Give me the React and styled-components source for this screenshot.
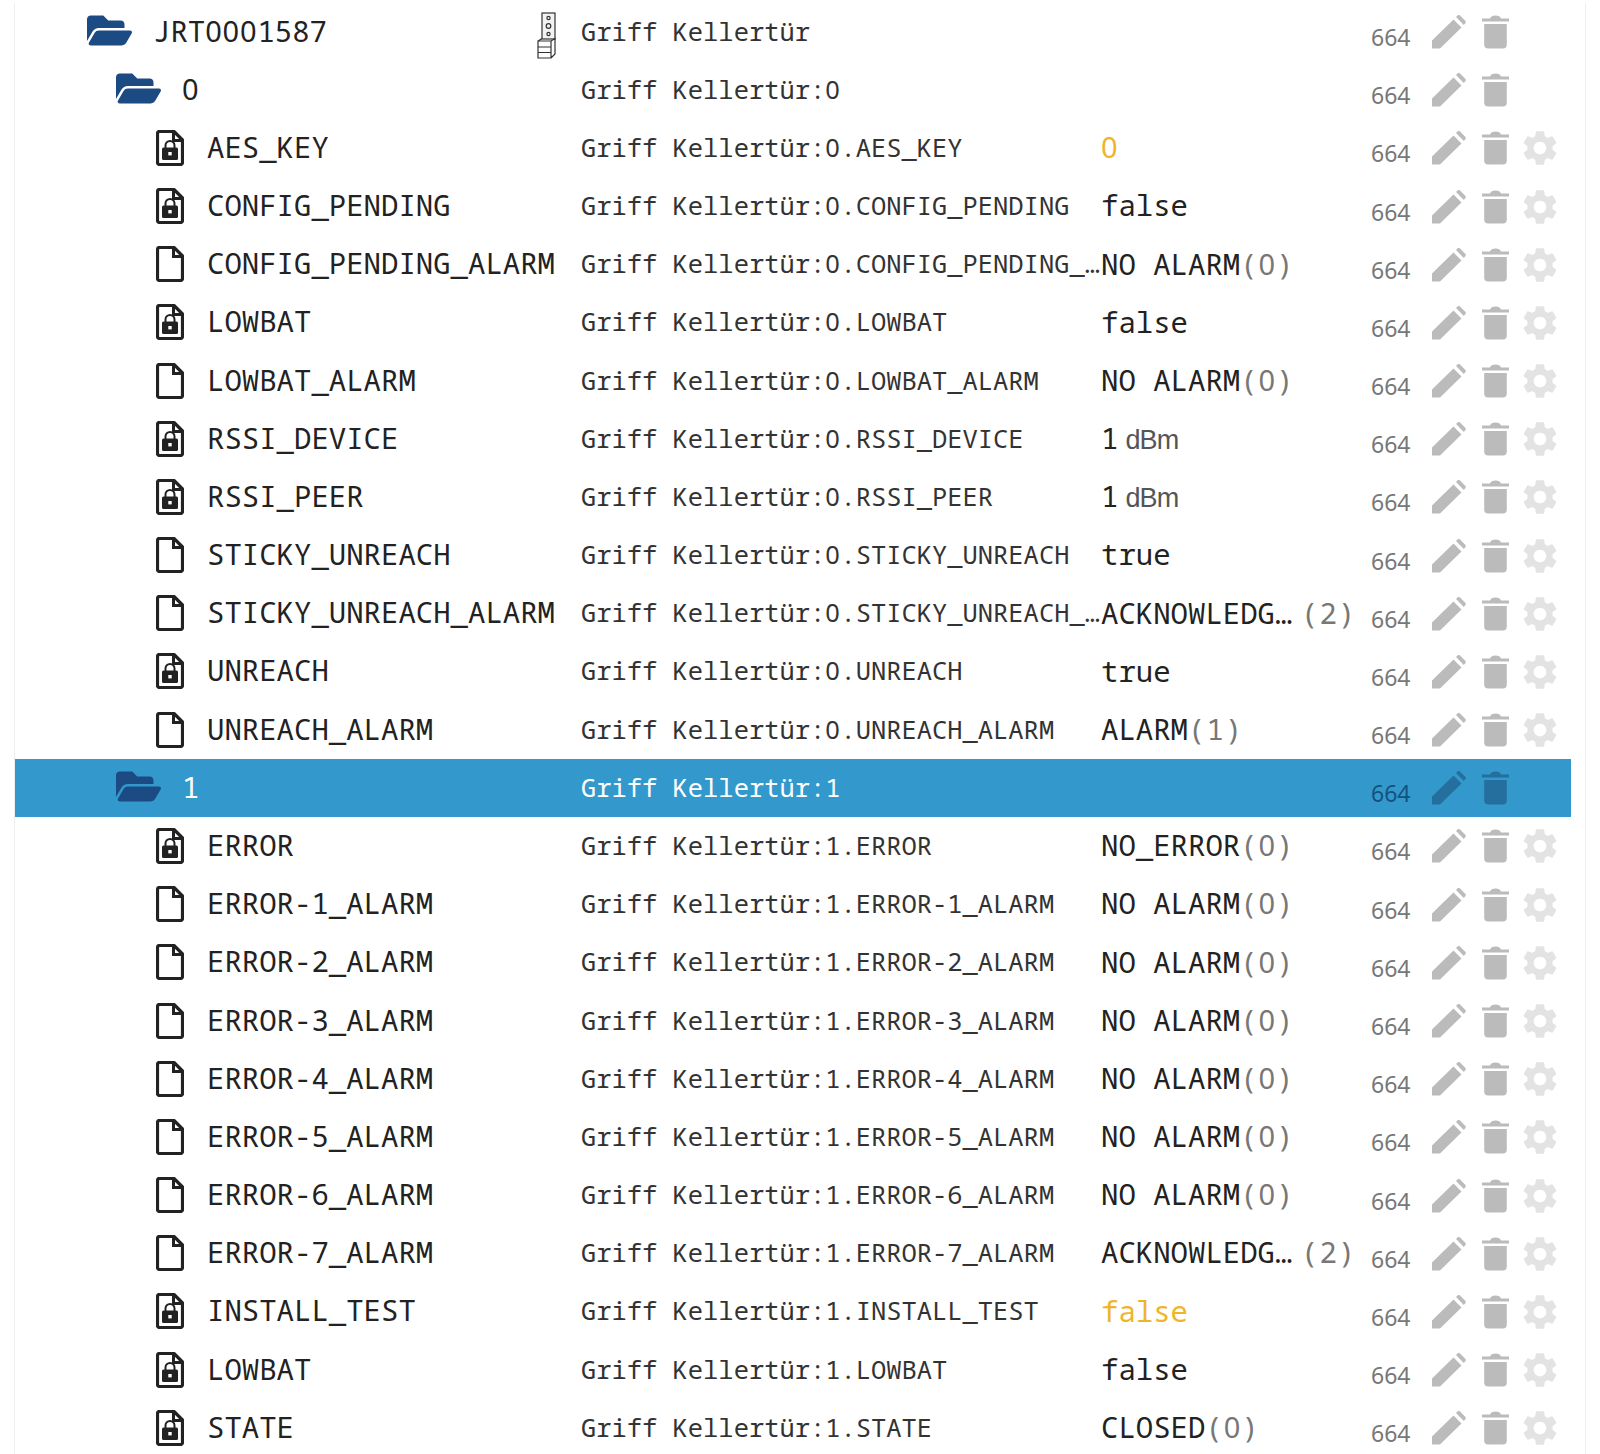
import React from 'react';
import styled, { createGlobalStyle } from 'styled-components';
import { FaFolderOpen } from 'react-icons/fa';
import { MdSettings } from 'react-icons/md';

const MONO = `"Noto Sans Mono", "Liberation Mono", monospace`;

const GlobalStyle = createGlobalStyle`
  html, body {
    margin: 0;
    padding: 0;
    height: 1454px;
    overflow: hidden;
    background: #fff;
  }
`;

const Panel = styled.div`
  margin: 3px 14px 0 14px;
  padding-right: 14px;
  height: 1451px;
  overflow: hidden;
  border-left: 1px solid #eee;
  border-right: 1px solid #eee;
`;

const Row = styled.div`
  display: grid;
  grid-template-columns: 566px 521px 269px 61px 50px 37px 1fr;
  align-items: center;
  height: 58.18px;
  background: ${(p) => (p.$selected ? '#3399cc' : 'transparent')};
`;

const NameCell = styled.div`
  display: flex;
  align-items: center;
  padding-left: ${(p) => p.$indent}px;
  font: 29px ${MONO};
  line-height: 54px;
  height: 54px;
  margin-top: -3px;
  color: ${(p) => (p.$selected ? '#fff' : '#222')};
  white-space: nowrap;
  position: relative;
`;

const NameIcon = styled.span`
  display: flex;
  position: relative;
  top: ${(p) => (p.$file ? 1 : 0)}px;
  left: ${(p) => (p.$file ? 2 : 0)}px;
  width: ${(p) => (p.$file ? 53 : 66)}px;
  flex: none;
`;

const DeviceIcon = styled.span`
  position: absolute;
  left: 522px;
  top: 8px;
`;

const TitleCell = styled.div`
  font: 25.45px ${MONO};
  margin-top: -3px;
  color: ${(p) => (p.$selected ? '#fff' : '#333')};
  white-space: nowrap;
  overflow: hidden;
  text-overflow: ellipsis;
`;

const ValueCell = styled.div`
  display: flex;
  align-items: baseline;
  margin: -3.5px 0 0 -1px;
  font: 29px ${MONO};
  white-space: nowrap;
  color: ${(p) => (p.$warn ? '#f0b429' : '#222')};
`;

const ValueText = styled.span`
  overflow: hidden;
  text-overflow: ellipsis;
  max-width: ${(p) => (p.$clip ? '192px' : 'none')};
`;

const Muted = styled.span`
  color: #777;
  letter-spacing: 1px;
  margin-left: ${(p) => (p.$gap ? '8px' : '0')};
`;

const Unit = styled.span`
  font-family: "Liberation Sans", sans-serif;
  font-size: 27px;
  letter-spacing: -0.8px;
  color: #555;
  margin-left: 7px;
`;

const Zero = styled.span`
  font-family: "Noto Sans", sans-serif;
  letter-spacing: 0.028em;
`;

const AclCell = styled.div`
  font: 23px "Noto Sans", sans-serif;
  color: ${(p) => (p.$selected ? '#13527e' : '#777')};
  position: relative;
  top: 5px;
`;

const ActionCell = styled.div`
  display: flex;
  color: ${(p) => (p.$selected ? '#256f9e' : '#bbb')};
`;

const GearCell = styled.div`
  display: flex;
  color: #e3e3e3;
`;

const PencilIcon = () => (
  <svg width="34" height="34" viewBox="0 0 34 34" fill="currentColor">
    <path d="M0 25.5 L21.5 4.5 L29.5 12.5 L8 33.5 L0 33.5 Z" />
    <path d="M24 2 L26 0 Q27 -0.5 28 0.5 L33.5 6 Q34 7 33.5 8 L31.8 10 Z" />
  </svg>
);

const TrashIcon = () => (
  <svg width="27" height="34" viewBox="0 0 27 34" fill="currentColor">
    <path d="M0 3.5 H8 Q9 0.5 13.5 0.5 Q18 0.5 19 3.5 H27 V6.5 H0 Z" />
    <path d="M2.2 9 H24.8 V29.5 Q24.8 33.5 20.8 33.5 H6.2 Q2.2 33.5 2.2 29.5 Z" />
  </svg>
);

const FileIcon = ({ locked }) => (
  <svg width="28" height="36" viewBox="0 0 28 36">
    <path
      d="M3.5 1.5 H18 L26.5 10 V32.5 Q26.5 34.5 24.5 34.5 H3.5 Q1.5 34.5 1.5 32.5 V3.5 Q1.5 1.5 3.5 1.5 Z"
      fill="#fff"
      stroke="#222"
      strokeWidth="3.2"
      strokeLinejoin="round"
    />
    <path d="M17.5 1.5 V10.5 H26.5" fill="none" stroke="#222" strokeWidth="3" />
    {locked && (
      <g>
        <path d="M9.5 18 V15.5 a4.5 4.5 0 0 1 9 0 V18" fill="none" stroke="#222" strokeWidth="2" />
        <rect x="6" y="17.5" width="16" height="12.5" rx="1.5" fill="#222" />
        <rect x="12.3" y="22" width="3.4" height="3.4" fill="#fff" />
      </g>
    )}
  </svg>
);

const HandleIcon = () => (
  <svg width="19" height="47" viewBox="0 0 19 47" fill="none" stroke="#333" strokeWidth="1.2">
    <rect x="5" y="1" width="13" height="26" fill="#f2f2f2" />
    <circle cx="11.5" cy="6" r="1.6" />
    <circle cx="11.5" cy="14" r="2.3" />
    <circle cx="11.5" cy="22" r="1.6" />
    <path d="M1 29 H14 V46 H1 Z M1 29 L5 26.5 M14 29 L18 26.5 V42 L14 46 M1 35 H14 M1 40.5 H14" />
  </svg>
);

// The mono font slashes its zero, the reference does not
const Mono = ({ children }) =>
  String(children)
    .split(/(0)/)
    .map((part, i) => (part === '0' ? <Zero key={i}>0</Zero> : part));

const FOLDER = '#1b4b82';

const ROWS = [
  { level: 0, name: 'JRT0001587', title: 'Griff Kellertür', folder: true, device: true },
  { level: 1, name: '0', title: 'Griff Kellertür:0', folder: true },
  { id: '0.AES_KEY', name: 'AES_KEY', locked: true, value: '0', warn: true },
  { id: '0.CONFIG_PENDING', name: 'CONFIG_PENDING', locked: true, value: 'false' },
  { id: '0.CONFIG_PENDING_ALARM', name: 'CONFIG_PENDING_ALARM', value: 'NO ALARM', code: '(0)' },
  { id: '0.LOWBAT', name: 'LOWBAT', locked: true, value: 'false' },
  { id: '0.LOWBAT_ALARM', name: 'LOWBAT_ALARM', value: 'NO ALARM', code: '(0)' },
  { id: '0.RSSI_DEVICE', name: 'RSSI_DEVICE', locked: true, value: '1', unit: 'dBm' },
  { id: '0.RSSI_PEER', name: 'RSSI_PEER', locked: true, value: '1', unit: 'dBm' },
  { id: '0.STICKY_UNREACH', name: 'STICKY_UNREACH', value: 'true' },
  { id: '0.STICKY_UNREACH_ALARM', name: 'STICKY_UNREACH_ALARM', value: 'ACKNOWLEDGED', code: '(2)', clip: true },
  { id: '0.UNREACH', name: 'UNREACH', locked: true, value: 'true' },
  { id: '0.UNREACH_ALARM', name: 'UNREACH_ALARM', value: 'ALARM', code: '(1)' },
  { level: 1, name: '1', title: 'Griff Kellertür:1', folder: true, selected: true },
  { id: '1.ERROR', name: 'ERROR', locked: true, value: 'NO_ERROR', code: '(0)' },
  { id: '1.ERROR-1_ALARM', name: 'ERROR-1_ALARM', value: 'NO ALARM', code: '(0)' },
  { id: '1.ERROR-2_ALARM', name: 'ERROR-2_ALARM', value: 'NO ALARM', code: '(0)' },
  { id: '1.ERROR-3_ALARM', name: 'ERROR-3_ALARM', value: 'NO ALARM', code: '(0)' },
  { id: '1.ERROR-4_ALARM', name: 'ERROR-4_ALARM', value: 'NO ALARM', code: '(0)' },
  { id: '1.ERROR-5_ALARM', name: 'ERROR-5_ALARM', value: 'NO ALARM', code: '(0)' },
  { id: '1.ERROR-6_ALARM', name: 'ERROR-6_ALARM', value: 'NO ALARM', code: '(0)' },
  { id: '1.ERROR-7_ALARM', name: 'ERROR-7_ALARM', value: 'ACKNOWLEDGED', code: '(2)', clip: true },
  { id: '1.INSTALL_TEST', name: 'INSTALL_TEST', locked: true, value: 'false', warn: true },
  { id: '1.LOWBAT', name: 'LOWBAT', locked: true, value: 'false' },
  { id: '1.STATE', name: 'STATE', locked: true, value: 'CLOSED', code: '(0)' },
];

const TreeRow = ({ row }) => {
  const indent = row.folder ? 72 + row.level * 29 : 139;
  const title = row.title || `Griff Kellertür:${row.id}`;

  return (
    <Row $selected={row.selected}>
      <NameCell $indent={indent} $selected={row.selected}>
        <NameIcon $file={!row.folder}>
          {row.folder ? <FaFolderOpen size={45} color={FOLDER} /> : <FileIcon locked={row.locked} />}
        </NameIcon>
        <span>
          <Mono>{row.name}</Mono>
        </span>
        {row.device && (
          <DeviceIcon>
            <HandleIcon />
          </DeviceIcon>
        )}
      </NameCell>
      <TitleCell $selected={row.selected}>
        <Mono>{title}</Mono>
      </TitleCell>
      <ValueCell $warn={row.warn}>
        {row.value && (
          <ValueText $clip={row.clip}>
            <Mono>{row.value}</Mono>
          </ValueText>
        )}
        {row.code && (
          <Muted $gap={row.clip}>
            <Mono>{row.code}</Mono>
          </Muted>
        )}
        {row.unit && <Unit>{row.unit}</Unit>}
      </ValueCell>
      <AclCell $selected={row.selected}>664</AclCell>
      <ActionCell $selected={row.selected}>
        <PencilIcon />
      </ActionCell>
      <ActionCell $selected={row.selected}>
        <TrashIcon />
      </ActionCell>
      {!row.folder && (
        <GearCell>
          <MdSettings size={42} />
        </GearCell>
      )}
    </Row>
  );
};

export default function App() {
  return (
    <>
      <GlobalStyle />
      <Panel>
        {ROWS.map((row) => (
          <TreeRow key={row.id || row.name} row={row} />
        ))}
      </Panel>
    </>
  );
}
